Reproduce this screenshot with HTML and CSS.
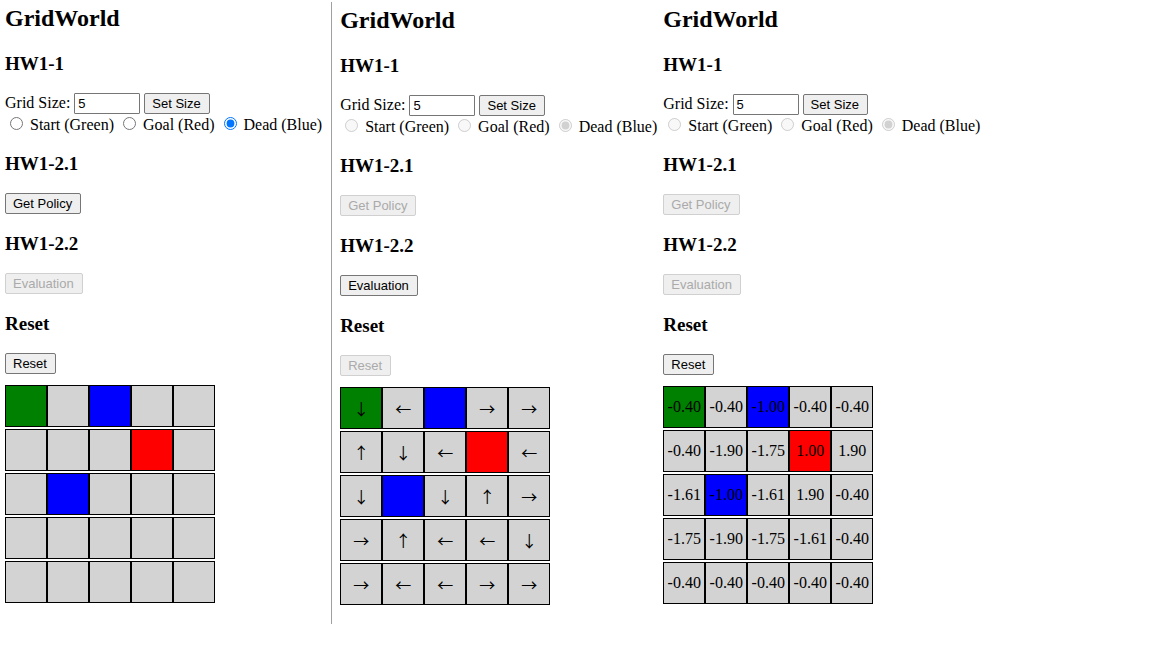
FILE: index.html
```html
<!DOCTYPE html>
<html lang="en">
<head>
<meta charset="utf-8">
<title>GridWorld</title>
<link rel="stylesheet" href="styles.css">
</head>
<body>
<main class="worlds">
  <section class="world world-setup">
    <h2 class="title">GridWorld</h2>
    <h3 class="heading">HW1-1</h3>
    <div class="size-row">
      <label for="size-a">Grid Size:</label>
      <input class="size" id="size-a" type="text" value="5">
      <button class="button" type="button">Set Size</button>
    </div>
    <div class="modes">
      <input type="radio" name="mode-a" id="start-a"> <label for="start-a">Start (Green)</label>
      <input type="radio" name="mode-a" id="goal-a"> <label for="goal-a">Goal (Red)</label>
      <input type="radio" name="mode-a" id="dead-a" checked> <label for="dead-a">Dead (Blue)</label>
    </div>
    <h3 class="heading">HW1-2.1</h3>
    <button class="button" type="button">Get Policy</button>
    <h3 class="heading">HW1-2.2</h3>
    <button class="button" type="button" disabled>Evaluation</button>
    <h3 class="heading">Reset</h3>
    <button class="button" type="button">Reset</button>
    <table class="grid">
      <tr><td class="start"></td><td></td><td class="dead"></td><td></td><td></td></tr>
      <tr><td></td><td></td><td></td><td class="goal"></td><td></td></tr>
      <tr><td></td><td class="dead"></td><td></td><td></td><td></td></tr>
      <tr><td></td><td></td><td></td><td></td><td></td></tr>
      <tr><td></td><td></td><td></td><td></td><td></td></tr>
    </table>
  </section>

  <section class="world world-policy">
    <h2 class="title">GridWorld</h2>
    <h3 class="heading">HW1-1</h3>
    <div class="size-row">
      <label for="size-b">Grid Size:</label>
      <input class="size" id="size-b" type="text" value="5">
      <button class="button" type="button">Set Size</button>
    </div>
    <div class="modes">
      <input type="radio" name="mode-b" id="start-b" disabled> <label for="start-b">Start (Green)</label>
      <input type="radio" name="mode-b" id="goal-b" disabled> <label for="goal-b">Goal (Red)</label>
      <input type="radio" name="mode-b" id="dead-b" checked disabled> <label for="dead-b">Dead (Blue)</label>
    </div>
    <h3 class="heading">HW1-2.1</h3>
    <button class="button" type="button" disabled>Get Policy</button>
    <h3 class="heading">HW1-2.2</h3>
    <button class="button" type="button">Evaluation</button>
    <h3 class="heading">Reset</h3>
    <button class="button" type="button" disabled>Reset</button>
    <table class="grid arrows">
      <tr><td class="start">↓</td><td>←</td><td class="dead"></td><td>→</td><td>→</td></tr>
      <tr><td>↑</td><td>↓</td><td>←</td><td class="goal"></td><td>←</td></tr>
      <tr><td>↓</td><td class="dead"></td><td>↓</td><td>↑</td><td>→</td></tr>
      <tr><td>→</td><td>↑</td><td>←</td><td>←</td><td>↓</td></tr>
      <tr><td>→</td><td>←</td><td>←</td><td>→</td><td>→</td></tr>
    </table>
  </section>

  <section class="world world-values">
    <h2 class="title">GridWorld</h2>
    <h3 class="heading">HW1-1</h3>
    <div class="size-row">
      <label for="size-c">Grid Size:</label>
      <input class="size" id="size-c" type="text" value="5">
      <button class="button" type="button">Set Size</button>
    </div>
    <div class="modes">
      <input type="radio" name="mode-c" id="start-c" disabled> <label for="start-c">Start (Green)</label>
      <input type="radio" name="mode-c" id="goal-c" disabled> <label for="goal-c">Goal (Red)</label>
      <input type="radio" name="mode-c" id="dead-c" checked disabled> <label for="dead-c">Dead (Blue)</label>
    </div>
    <h3 class="heading">HW1-2.1</h3>
    <button class="button" type="button" disabled>Get Policy</button>
    <h3 class="heading">HW1-2.2</h3>
    <button class="button" type="button" disabled>Evaluation</button>
    <h3 class="heading">Reset</h3>
    <button class="button" type="button">Reset</button>
    <table class="grid">
      <tr><td class="start">-0.40</td><td>-0.40</td><td class="dead">-1.00</td><td>-0.40</td><td>-0.40</td></tr>
      <tr><td>-0.40</td><td>-1.90</td><td>-1.75</td><td class="goal">1.00</td><td>1.90</td></tr>
      <tr><td>-1.61</td><td class="dead">-1.00</td><td>-1.61</td><td>1.90</td><td>-0.40</td></tr>
      <tr><td>-1.75</td><td>-1.90</td><td>-1.75</td><td>-1.61</td><td>-0.40</td></tr>
      <tr><td>-0.40</td><td>-0.40</td><td>-0.40</td><td>-0.40</td><td>-0.40</td></tr>
    </table>
  </section>
</main>
</body>
</html>
```
FILE: styles.css
```css
body {
  margin: 0;
  background: #fff;
  color: #000;
  font-family: "Liberation Serif", "Times New Roman", serif;
  font-size: 16px;
  line-height: 20px;
}

.worlds {
  display: flex;
  align-items: stretch;
  padding-top: 2px;
}

.world {
  padding-bottom: 17px;
  white-space: nowrap;
}

.world-setup {
  padding: 3px 9px 17px 5px;
  border-right: 1px solid #a0a0a0;
}

.world-policy {
  padding: 5px 6px 17px 8px;
}

.world-values {
  padding-top: 4px;
}

.title {
  margin: 0;
  font-size: 24px;
  line-height: 27px;
}

.heading {
  margin: 19px 0;
  font-size: 19px;
  line-height: 21px;
}

.title + .heading {
  margin-top: 21px;
}

.size-row {
  display: flex;
  gap: 4px;
}

.size,
.button {
  box-sizing: border-box;
  height: 21px;
  font-family: "Liberation Sans", Arial, sans-serif;
  font-size: 13px;
}

.size {
  width: 66px;
  padding: 1px 3px;
  border: 1px solid #767676;
  border-radius: 1px;
}

.button {
  display: block;
  padding: 1px 8px 1px 7px;
  border: 1px solid #767676;
  border-radius: 2px;
  background: #efefef;
  color: #000;
}

.button:disabled {
  border-color: #d0d0d0;
  color: #aaa;
}

.modes {
  height: 20px;
}

.grid {
  margin-top: 9px;
  border-collapse: separate;
  border-spacing: 0 2px;
}

.grid td {
  box-sizing: border-box;
  width: 42px;
  min-width: 42px;
  height: 42px;
  padding: 0;
  border: 1px solid #000;
  background: #d3d3d3;
  text-align: center;
}

.arrows td {
  font-family: "Noto Sans CJK SC", sans-serif;
}

.grid .start {
  background: #008000;
}

.grid .goal {
  background: #f00;
}

.grid .dead {
  background: #00f;
}
```
